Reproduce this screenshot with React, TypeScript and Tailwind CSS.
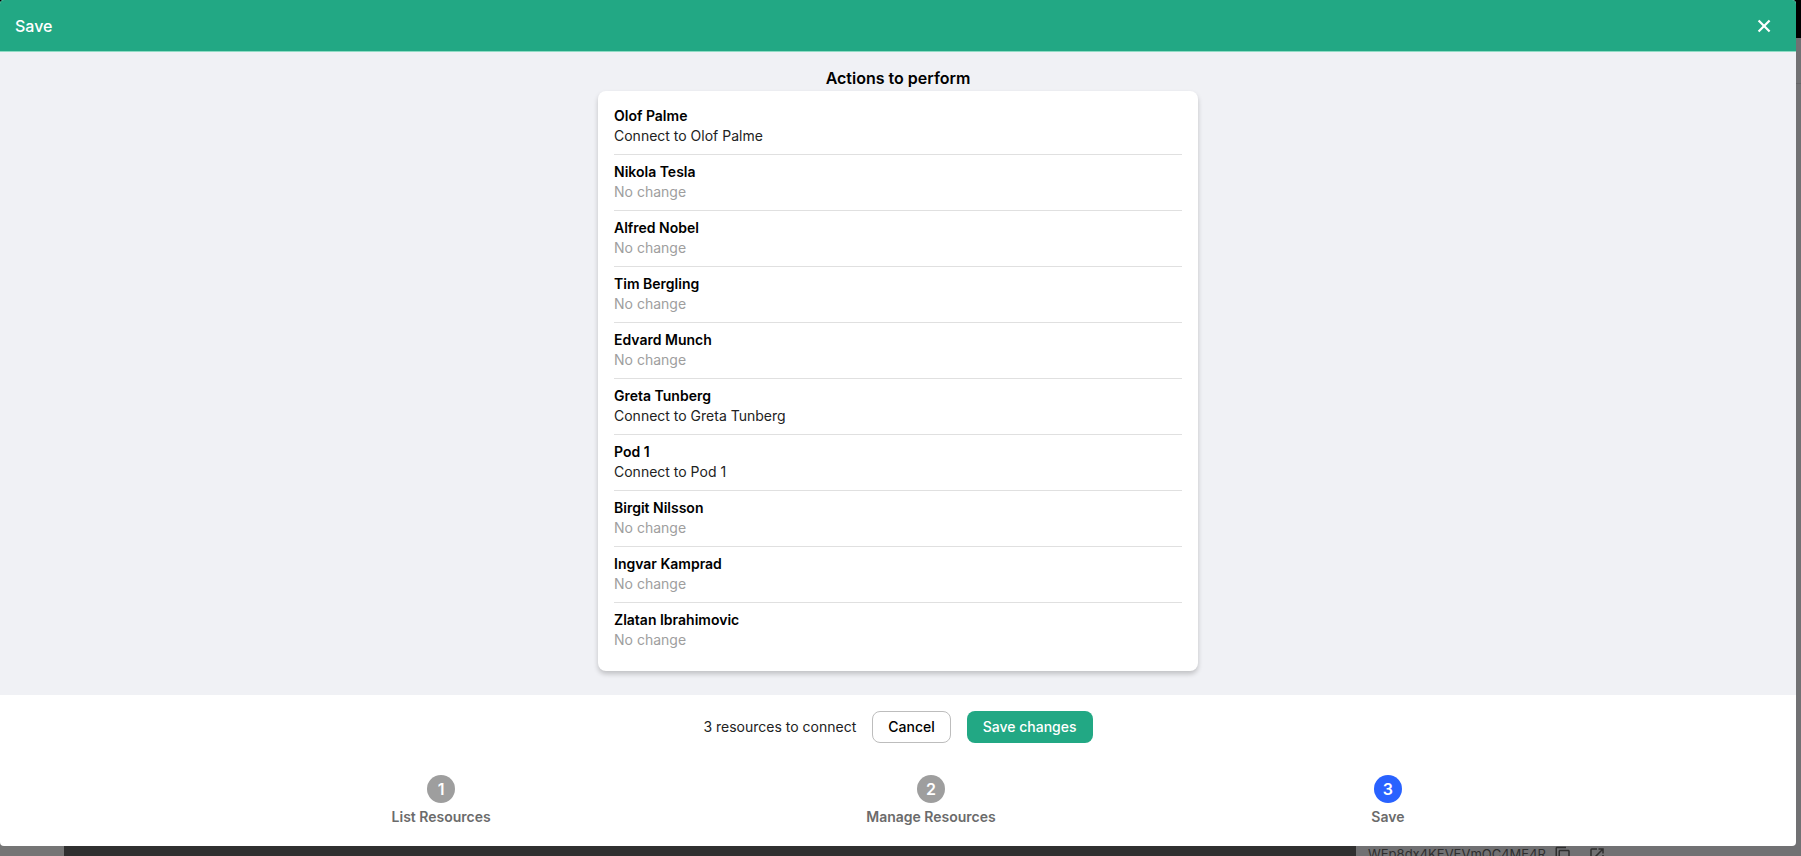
import React from 'react';
import { X } from 'lucide-react';
import { MdContentCopy, MdOpenInNew } from 'react-icons/md';

const actions = [
  { name: 'Olof Palme', connect: true },
  { name: 'Nikola Tesla', connect: false },
  { name: 'Alfred Nobel', connect: false },
  { name: 'Tim Bergling', connect: false },
  { name: 'Edvard Munch', connect: false },
  { name: 'Greta Tunberg', connect: true },
  { name: 'Pod 1', connect: true },
  { name: 'Birgit Nilsson', connect: false },
  { name: 'Ingvar Kamprad', connect: false },
  { name: 'Zlatan Ibrahimovic', connect: false },
];

const steps = ['List Resources', 'Manage Resources', 'Save'];

// Dimmed page behind the dialog
const Backdrop = () => (
  <div className="flex h-full flex-col" aria-hidden="true">
    <div className="h-[38px] bg-black" />
    <div className="flex min-h-0 flex-1">
      <div className="w-16 bg-[#757575]" />
      <div className="flex-1 bg-[#303030]" />
      <div className="flex w-[445px] flex-col overflow-hidden bg-[#717173]">
        <div className="h-[46px] border-b border-[#656567]" />
        <div className="-mb-2 mt-auto flex h-[18px] shrink-0 items-center pl-3 text-[13px] text-[#2e2e2e]">
          <span className="mr-2">WEp8dx4KEVEVmQC4ME4R</span>
          <MdContentCopy className="mr-4 size-[18px]" />
          <MdOpenInNew className="size-[18px]" />
        </div>
      </div>
    </div>
  </div>
);

const ActionList = () => (
  <ul className="w-full max-w-[600px] rounded-lg bg-white px-4 pt-2 pb-3 shadow-[0_3px_5px_rgba(0,0,0,0.2)]">
    {actions.map(({ name, connect }) => (
      <li key={name} className="border-b border-[#e0e0e0] pt-[7px] pb-2 text-sm last:border-transparent">
        <p className="font-semibold">{name}</p>
        <p className={connect ? 'text-[#222222]' : 'text-[#9e9e9e]'}>
          {connect ? `Connect to ${name}` : 'No change'}
        </p>
      </li>
    ))}
  </ul>
);

const Stepper = () => (
  <ol className="flex justify-evenly px-4">
    {steps.map((label, i) => (
      <li key={label} className="flex flex-col items-center gap-1 text-sm font-semibold text-[#6b6b6b]">
        <span
          className={`flex size-7 items-center justify-center rounded-full text-base text-white ${
            i === 2 ? 'bg-[#2962ff]' : 'bg-[#9e9e9e]'
          }`}
        >
          {i + 1}
        </span>
        {label}
      </li>
    ))}
  </ol>
);

const App = () => {
  return (
    <div className="relative h-screen overflow-hidden font-[Inter,sans-serif] text-black">
      <Backdrop />
      <div
        role="dialog"
        aria-labelledby="dialog-title"
        className="absolute inset-0 mr-[5px] mb-[10px] flex flex-col overflow-hidden rounded-sm bg-white"
      >
        <header className="flex h-[52px] shrink-0 items-center justify-between border-b border-[#8fdcc4] bg-[#22a884] pr-5 pl-[15px] text-white">
          <h1 id="dialog-title" className="font-medium">
            Save
          </h1>
          <button type="button" aria-label="Close">
            <X className="size-[22px]" strokeWidth={2.4} strokeLinecap="butt" viewBox="1 0 24 24" />
          </button>
        </header>
        <main className="flex min-h-0 flex-1 flex-col items-center bg-[#f0f1f5] pt-[13px]">
          <h2 className="leading-[26px] font-semibold">Actions to perform</h2>
          <ActionList />
        </main>
        <footer className="pt-4 pb-[19px]">
          <div className="mb-8 flex items-center justify-center gap-4 text-sm">
            <p className="text-[#222222]">3 resources to connect</p>
            <button type="button" className="h-8 rounded-lg border border-[#bdbdbd] px-[15px] font-medium">
              Cancel
            </button>
            <button type="button" className="h-8 rounded-lg bg-[#22a884] px-4 font-medium text-white">
              Save changes
            </button>
          </div>
          <Stepper />
        </footer>
      </div>
    </div>
  );
};

export default App;
